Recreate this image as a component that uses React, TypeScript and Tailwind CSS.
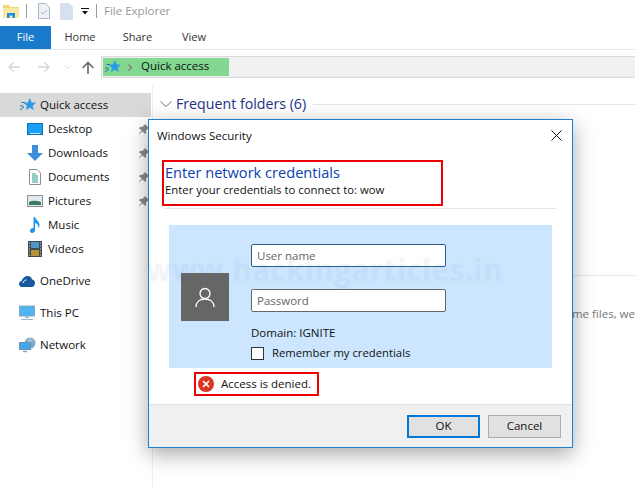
import React from "react";

const font = { fontFamily: '"Open Sans", "Noto Sans", sans-serif' };

function QuickStar({ className = "" }: { className?: string }) {
  return (
    <svg viewBox="0 0 16 16" className={className}>
      <path d="M9.800 1l1.900 4.400 4.300.4-3.300 2.900 1 4.300-3.900-2.300-3.900 2.300 1-4.300-3.300-2.900 4.300-.4z" fill="#2b9be8" />
      <path d="M1.500 5.500h3.500M0 9h3.500M0 13l4-3" stroke="#2f6fa8" strokeWidth="1" />
    </svg>
  );
}

function SideRow({ icon, label, pin }: { icon: React.ReactNode; label: string; pin?: boolean }) {
  return (
    <div className="flex h-6 items-center pl-[27px] text-[11.500px] text-[#111]">
      <div className="flex w-[21px] justify-start">{icon}</div>
      <span className="flex-1 pb-px">{label}</span>
      {pin && (
        <svg viewBox="0 0 12 12" className="mr-[2px] h-[12px] w-[12px]">
          <path d="M7 1l4 4-1 .6-2 2.200.2 2L6.800 11 4.600 8.200 1.500 11 1 10.500 3.800 7.400 1 5.200l1.200-1.400 2 .2 2.200-2z" fill="#8a8a8a" />
        </svg>
      )}
    </div>
  );
}

function Monitor({ className = "" }: { className?: string }) {
  return (
    <svg viewBox="0 0 16 16" className={className}>
      <rect x="0.500" y="1" width="15" height="10" fill="#4fb4f2" stroke="#7e9db5" strokeWidth="0.800" />
      <path d="M6 11.500h4v1.500H6zM2 14h12v1H2z" fill="#9fb3c4" />
    </svg>
  );
}

export default function App() {
  return (
    <div style={font} className="relative flex h-[489px] w-[635px] flex-col overflow-hidden bg-white">
      {/* Title bar */}
      <div className="flex h-[26px] items-center pb-[4px]">
        <svg viewBox="0 0 16 16" className="ml-[3px] h-[16px] w-[16px]">
          <path d="M0 2h6l1 2h9v11H0z" fill="#f5d57a" />
          <path d="M0 5h16v10H0z" fill="#fbe7a6" />
          <path d="M4 10h8v5H9.500v-2.500h-3V15H4z" fill="#1c8fdc" />
        </svg>
        <div className="ml-[7px] h-[14px] w-px bg-[#9a9a9a]" />
        <svg viewBox="0 0 12 16" className="ml-[11px] h-[16px] w-[12px]">
          <path d="M.5.500h7l4 4v11H.500z" fill="#eef2f7" stroke="#a9b6c6" />
          <path d="M3 9l2 2 4-4" fill="none" stroke="#a9b6c6" strokeWidth="1" />
        </svg>
        <svg viewBox="0 0 13 17" className="ml-[10px] h-[17px] w-[13px]">
          <path d="M0 0h9l4 4v13H0z" fill="#d6e0ef" />
        </svg>
        <svg viewBox="0 0 8 7" className="ml-[8px] h-[7px] w-[8px]">
          <path d="M0 0h8v1H0zM1 3h6L4 6.500z" fill="#111" />
        </svg>
        <div className="ml-[7px] h-[14px] w-px bg-[#9a9a9a]" />
        <span className="ml-[7px] text-[11.500px] text-[#9a9a9a]">File Explorer</span>
      </div>

      {/* Ribbon tabs */}
      <div className="flex h-[24px] items-stretch border-b border-[#e6e6e6] text-[11px] text-[#333]">
        <div className="flex w-[51px] items-center justify-center bg-[#1979ca] text-white">File</div>
        <div className="flex w-[58px] items-center justify-center">Home</div>
        <div className="flex w-[57px] items-center justify-center">Share</div>
        <div className="flex w-[56px] items-center justify-center">View</div>
      </div>

      {/* Address row */}
      <div className="flex h-[35px] items-start pt-[6px]">
        <div className="flex h-[22px] w-[101px] items-center">
          <svg viewBox="0 0 12 12" className="ml-[8px] h-[12px] w-[12px]">
            <path d="M12 6H1M5.500 1.500L1 6l4.500 4.500" fill="none" stroke="#d4d4d4" strokeWidth="1.300" />
          </svg>
          <svg viewBox="0 0 12 12" className="ml-[18px] h-[12px] w-[12px]">
            <path d="M0 6h11M6.500 1.500L11 6l-4.500 4.500" fill="none" stroke="#d4d4d4" strokeWidth="1.300" />
          </svg>
          <svg viewBox="0 0 7 4" className="ml-[14px] h-[4px] w-[7px]">
            <path d="M.5.500l3 3 3-3" fill="none" stroke="#d4d4d4" />
          </svg>
          <svg viewBox="0 0 12 13" className="ml-[11px] h-[13px] w-[12px]">
            <path d="M6 13V1.500M.7 6.800L6 1.500l5.300 5.300" fill="none" stroke="#6f6f6f" strokeWidth="1.700" />
          </svg>
        </div>
        <div className="flex h-[22px] flex-1 items-stretch border border-r-0 border-[#d9d9d9] bg-[#f1f1f1] p-px">
          <div className="flex w-[126px] items-center bg-[#83d891] text-[11.500px] text-[#111]">
            <QuickStar className="ml-[2px] h-[16px] w-[16px]" />
            <svg viewBox="0 0 5 7" className="ml-[7px] h-[7px] w-[5px]">
              <path d="M.5.500l3 3-3 3" fill="none" stroke="#777" strokeWidth="1.200" />
            </svg>
            <span className="ml-[8px] pb-[2px]">Quick access</span>
          </div>
        </div>
      </div>

      {/* Body */}
      <div className="flex flex-1">
        <div className="w-[153px] border-r border-[#f0f0f0] pt-[8px]">
          <div className="flex h-6 w-[151px] items-center bg-[#d9d9d9] pl-[20px] text-[11.500px] text-[#111]">
            <QuickStar className="h-[16px] w-[16px]" />
            <span className="ml-[4px] pb-px">Quick access</span>
          </div>
          <SideRow
            pin
            label="Desktop"
            icon={
              <svg viewBox="0 0 16 13" className="h-[13px] w-[16px]">
                <rect x="0.500" y="0.500" width="15" height="11" fill="#18a0f5" stroke="#0f6fb5" />
                <path d="M3 10.500h10" stroke="#bfe4fb" />
              </svg>
            }
          />
          <SideRow
            pin
            label="Downloads"
            icon={
              <svg viewBox="0 0 16 16" className="h-[16px] w-[16px]">
                <path d="M5 0h6v8h5l-8 8-8-8h5z" fill="#3d8fdc" />
              </svg>
            }
          />
          <SideRow
            pin
            label="Documents"
            icon={
              <svg viewBox="0 0 12 16" className="ml-[2px] h-[16px] w-[12px]">
                <path d="M.5.500h7.500l3.500 3.500v11.500H.500z" fill="#fff" stroke="#8f8f8f" />
                <path d="M3 5h4M3 7h6M3 9h6M3 11h6M3 13h6" stroke="#2f9a8e" />
              </svg>
            }
          />
          <SideRow
            pin
            label="Pictures"
            icon={
              <svg viewBox="0 0 16 12" className="h-[12px] w-[16px]">
                <rect x="0.500" y="0.500" width="15" height="11" fill="#dfe9ef" stroke="#8f8f8f" />
                <path d="M2 7c4-2 8-1 12 0v3H2z" fill="#3f7a63" />
              </svg>
            }
          />
          <SideRow
            label="Music"
            icon={
              <svg viewBox="0 0 12 16" className="ml-[2px] h-[16px] w-[12px]">
                <path d="M4.500 0h1.500c.5 3 4.500 4 4.500 8 0 1.500-.5 2.500-1 3 0-3-1.500-4.500-3.500-5v7.500c0 1.500-1.500 2.500-3 2.500S1 15 1 13.500 2.500 11 4.500 11z" fill="#1f95e8" />
              </svg>
            }
          />
          <SideRow
            label="Videos"
            icon={
              <svg viewBox="0 0 14 16" className="ml-[1px] h-[16px] w-[14px]">
                <rect width="14" height="16" fill="#3f4a52" />
                <rect x="3" y="1" width="8" height="6" fill="#4f97c8" />
                <rect x="3" y="9" width="8" height="6" fill="#b5933a" />
                <path d="M1 2h1M1 5h1M1 8h1M1 11h1M1 14h1M12 2h1M12 5h1M12 8h1M12 11h1M12 14h1" stroke="#ddd" />
              </svg>
            }
          />

          <div className="mt-[8px] flex h-6 items-center pl-[19px] text-[11.500px] text-[#111]">
            <svg viewBox="0 0 16 11" className="h-[11px] w-[16px]">
              <path d="M3 11C1 11 0 9.500 0 8c0-2 1.500-3 2.500-3C3.500 2 6 0 8.500 0c2.500 0 4 1.500 4.500 3.500 1.500 0 3 1.500 3 3.500 0 2.500-1.500 4-3.500 4z" fill="#17599f" />
              <path d="M4 7c.5-2 2-3 3.500-3" stroke="#fff" fill="none" />
            </svg>
            <span className="ml-[5px] pb-px">OneDrive</span>
          </div>
          <div className="mt-[8px] flex h-6 items-center pl-[19px] text-[11.500px] text-[#111]">
            <Monitor className="h-[16px] w-[16px]" />
            <span className="ml-[5px] pb-px">This PC</span>
          </div>
          <div className="mt-[8px] flex h-6 items-center pl-[19px] text-[11.500px] text-[#111]">
            <svg viewBox="0 0 17 16" className="h-[16px] w-[17px]">
              <circle cx="11" cy="6" r="5.500" fill="#7fa9c4" />
              <path d="M8 3c2 1 4 1 6 0M11 1v10" stroke="#cfe0ea" fill="none" strokeWidth="0.700" />
              <rect x="0.500" y="5.500" width="11" height="7" fill="#3fa7ec" stroke="#6d95b3" />
              <path d="M4 14.500h4" stroke="#8aa3b6" strokeWidth="1.500" />
            </svg>
            <span className="ml-[4px] pb-px">Network</span>
          </div>
        </div>

        {/* Main pane, partly covered by the dialog */}
        <div className="min-w-0 flex-1 pt-[9px]">
          <div className="flex h-[20px] items-center pl-[7px]">
            <svg viewBox="0 0 12 6" className="h-[6px] w-[12px]">
              <path d="M.5.500L6 5.500l5.500-5" fill="none" stroke="#777" />
            </svg>
            <span className="ml-[4px] text-[14.200px] leading-[20px] text-[#1e3287]">Frequent folders (6)</span>
            <div className="ml-[7px] h-px flex-1 bg-[#e5e5e5]" />
          </div>
          <div className="mt-[161px] h-px bg-[#e5e5e5]" />
          <div className="mt-[30px] text-right text-[11.500px] leading-[16px] whitespace-nowrap text-[#777]">ome files, we</div>
        </div>
      </div>

      {/* Dialog */}
      <div className="absolute left-[148px] top-[119px] flex h-[329px] w-[425px] flex-col border border-[#1f80d0] bg-white shadow-[0_6px_20px_rgba(0,0,0,0.35)]">
        <div className="flex h-[31px] items-center justify-between pl-[8px] pr-[10px] text-[11.500px] text-[#111]">
          <span>Windows Security</span>
          <svg viewBox="0 0 11 11" className="h-[11px] w-[11px]">
            <path d="M.5.500l10 10M10.500.500l-10 10" stroke="#111" strokeWidth="1" fill="none" />
          </svg>
        </div>

        <div className="ml-[13px] mt-[9px] h-[46px] w-[281px] border-2 border-[#f00000] pl-[1px]">
          <div className="text-[14.600px] leading-[20px] text-[#0a3fb0]">Enter network credentials</div>
          <div className="text-[11.350px] leading-[16px] text-[#111]">Enter your credentials to connect to: wow</div>
        </div>
        <div className="mx-[16px] mt-[2px] h-px bg-[#e3e3e3]" />

        <div className="ml-[20px] mr-[20px] mt-[16px] flex h-[143px] items-center bg-[#cce6ff]">
          <div className="ml-[12px] flex h-[48px] w-[48px] items-center justify-center bg-[#666]">
            <svg viewBox="0 0 20 20" className="h-[20px] w-[20px]">
              <circle cx="10" cy="6.500" r="5" fill="none" stroke="#fff" strokeWidth="1.300" />
              <path d="M1 20c0-5 3.500-8 9-8s9 3 9 8" fill="none" stroke="#fff" strokeWidth="1.300" />
            </svg>
          </div>
          <div className="ml-[22px] flex h-full flex-col pt-[19px]">
            <div className="flex h-[23px] w-[195px] items-center rounded-[2px] border border-[#2c5d86] bg-white pl-[5px] text-[11.500px] text-[#666]">User name</div>
            <div className="mt-[22px] flex h-[23px] w-[195px] items-center rounded-[2px] border border-[#666] bg-white pl-[5px] text-[11.500px] text-[#666]">Password</div>
            <div className="mt-[13px] text-[11.500px] leading-[16px] text-[#111]">Domain: IGNITE</div>
            <div className="mt-[4px] flex items-center text-[11.300px] leading-[16px] text-[#111]">
              <div className="h-[13px] w-[13px] border border-[#333] bg-white" />
              <span className="ml-[8px]">Remember my credentials</span>
            </div>
          </div>
        </div>

        <div className="ml-[45px] mt-[4px] flex h-[24px] w-[125px] items-center border-2 border-[#f00000] pl-[2px] text-[11.500px] text-[#111]">
          <svg viewBox="0 0 16 16" className="h-[16px] w-[16px]">
            <circle cx="8" cy="8" r="8" fill="#dd3322" />
            <path d="M5 5l6 6M11 5l-6 6" stroke="#fff" strokeWidth="1.700" />
          </svg>
          <span className="ml-[7px]">Access is denied.</span>
        </div>

        <div className="mt-auto flex h-[43px] items-center justify-end gap-[8px] border-t border-[#dfdfdf] bg-[#f0f0f0] pr-[11px] text-[11.500px] text-[#111]">
          <div className="flex h-[23px] w-[73px] items-center justify-center border-2 border-[#0078d7] bg-[#e1e1e1]">OK</div>
          <div className="flex h-[23px] w-[73px] items-center justify-center border border-[#adadad] bg-[#e1e1e1]">Cancel</div>
        </div>
      </div>

      {/* Watermark */}
      <div className="pointer-events-none absolute left-[146px] top-[250px] whitespace-nowrap text-[29.500px] font-bold leading-[40px] tracking-[0.5px] text-[#3a7fd0] opacity-[0.07] [text-shadow:0_0_3px_rgba(255,190,60,0.9)]">
        www.hackingarticles.in
      </div>
    </div>
  );
}
